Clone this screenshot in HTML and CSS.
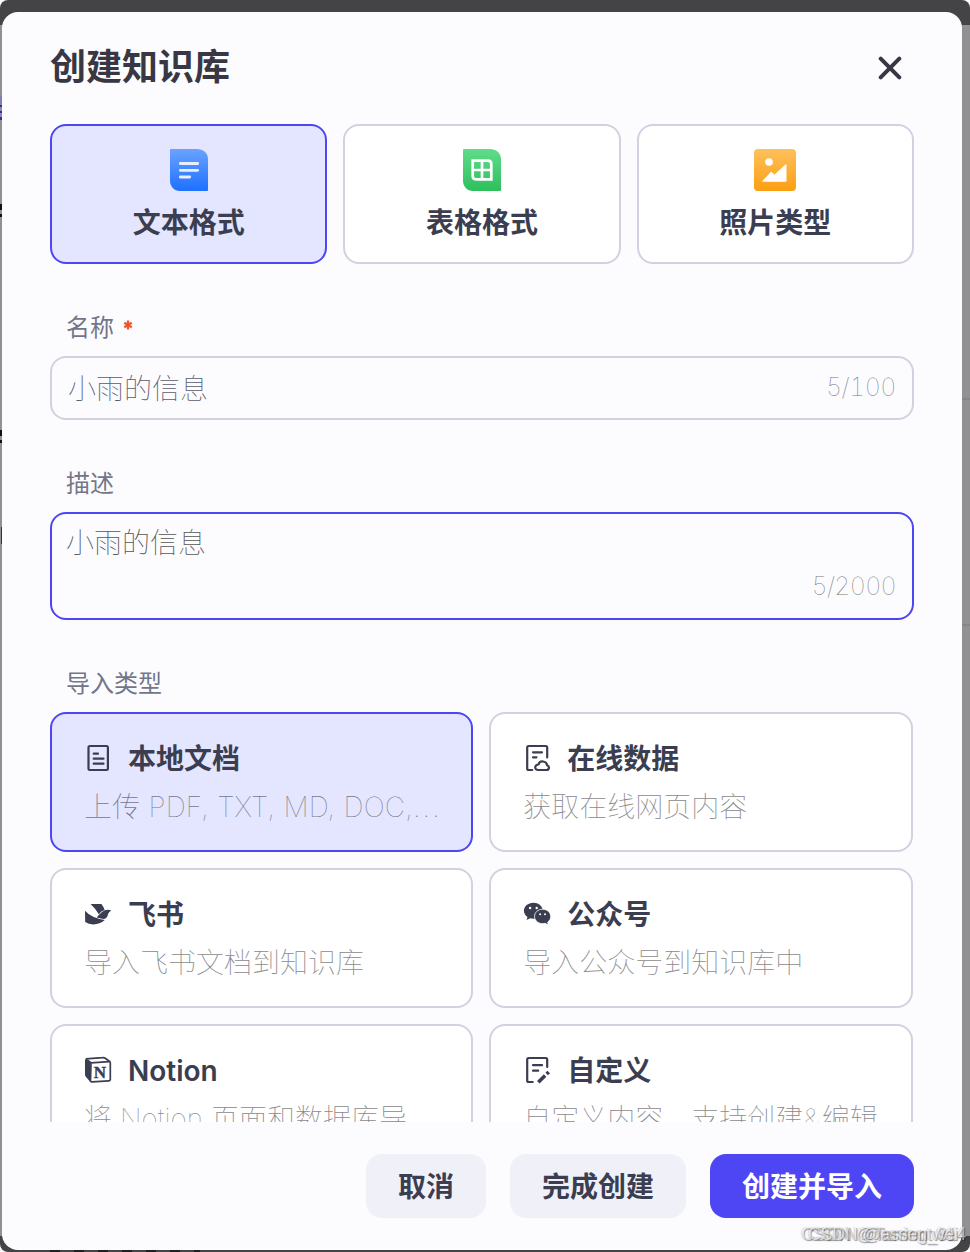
FILE: index.html
```html
<!DOCTYPE html>
<html lang="zh-CN">
<head>
<meta charset="utf-8">
<title>创建知识库</title>
<link rel="stylesheet" href="styles.css">
</head>
<body>
<div class="backdrop">
  <i class="mark mark-link"></i><i class="mark mark-a"></i><i class="mark mark-b"></i><i class="mark mark-c"></i>
  <i class="rule rule-a"></i><i class="rule rule-b"></i>
  <i class="foot-marks"></i>
  <main class="modal">
    <header class="head">
      <h1 class="title">创建知识库</h1>
      <button class="close" aria-label="关闭"><svg width="24" height="24" viewBox="0 0 24 24"><path d="M2.7 2.7 21.3 21.3M21.3 2.7 2.7 21.3" stroke="#383743" stroke-width="4" stroke-linecap="round"/></svg></button>
    </header>
    <div class="body">
      <div class="formats">
        <div class="format selected">
          <svg class="format-icon" width="42" height="42" viewBox="0 0 42 42"><defs><linearGradient id="blue" x2="0" y2="1"><stop stop-color="#69a3ff"/><stop offset="1" stop-color="#1e70ff"/></linearGradient></defs><path d="M3 0H29C35 0 40 4 40 10V41Q40 42 39 42H12C6 42 2 37 2 32V1Q2 0 3 0Z" fill="url(#blue)"/><path d="M12.3 14.5H29.7M12.3 21.3H29.7M12.3 28H21.7" stroke="#e9eeff" stroke-width="2.8" stroke-linecap="round"/></svg>
          <span>文本格式</span>
        </div>
        <div class="format">
          <svg class="format-icon" width="42" height="42" viewBox="0 0 42 42"><defs><linearGradient id="green" x2="0" y2="1"><stop stop-color="#61dc8b"/><stop offset="1" stop-color="#2dbf5c"/></linearGradient></defs><path d="M3 0H29C35 0 40 4 40 10V41Q40 42 39 42H12C6 42 2 37 2 32V1Q2 0 3 0Z" fill="url(#green)"/><path d="M11.7 11.7H27Q30.3 11.7 30.3 15V30.3H15Q11.7 30.3 11.7 27ZM21 11.7V30.3M11.7 21H30.3" fill="none" stroke="#fff" stroke-width="2.7"/></svg>
          <span>表格格式</span>
        </div>
        <div class="format">
          <svg class="format-icon" width="42" height="42" viewBox="0 0 42 42"><defs><linearGradient id="orange" x2="0" y2="1"><stop stop-color="#ffc05c"/><stop offset="1" stop-color="#fa9f12"/></linearGradient></defs><rect width="42" height="42" rx="4" fill="url(#orange)"/><circle cx="15" cy="13" r="3.8" fill="#fff"/><path d="M9 31.3 16.8 23Q17.3 22.5 17.8 23L20.3 25.7 31.5 15.5Q32.5 14.7 32.5 16V32Q32.5 32.8 31.5 32.8H9Q7.5 32.8 9 31.3Z" fill="#fff"/></svg>
          <span>照片类型</span>
        </div>
      </div>

      <div class="label">名称<svg class="required" width="10" height="10" viewBox="0 0 10 10"><path d="M5 .5V9.5M1.2 2.8 8.8 7.2M8.8 2.8 1.2 7.2" stroke="#f0542d" stroke-width="2.3"/></svg></div>
      <div class="field name-field"><span>小雨的信息</span><span class="count">5/100</span></div>
      <div class="label">描述</div>
      <div class="field desc-field"><span>小雨的信息</span><span class="count">5/2000</span></div>
      <div class="label">导入类型</div>

      <div class="sources">
        <div class="source selected">
          <div class="source-name"><svg width="28" height="28" viewBox="0 0 28 28"><g class="line"><rect x="4.5" y="2" width="19.4" height="24" rx="1.4"/><path d="M9.7 9.7H14M9.7 14.7H19.5M9.7 19.7H19.5"/></g></svg><span>本地文档</span></div>
          <div class="source-desc latin">上传 PDF, TXT, MD, DOC,<span class="dots">...</span></div>
        </div>
        <div class="source">
          <div class="source-name"><svg width="28" height="28" viewBox="-.7 0 28 28"><g class="line"><path d="M8.5 26H5Q3.5 26 3.5 24.5V3.5Q3.5 2 5 2H22Q23.5 2 23.5 3.5V13.5M9.3 8.3H18.3M9.3 13.3H12.8"/><path d="M14.5 26H22.8C25.4 26 26.5 22.3 23.3 21.2C23 17 16 15.8 14.8 20.5C10.5 20.8 10.5 26 14.5 26Z"/></g></svg><span>在线数据</span></div>
          <div class="source-desc">获取在线网页内容</div>
        </div>
        <div class="source">
          <div class="source-name"><svg width="28" height="28" viewBox="0 0 28 28"><g class="solid"><path d="M6.6 4H17.4Q19.5 6.5 20.6 10Q17 11 14.8 14.3Q11.4 8.5 6.6 4Z"/><path d="M27.2 10.3Q24.5 12.5 23.8 15Q22.5 20 17 18.6L12.7 17.5Q15 14.5 18 12Q21.5 8.8 27.2 10.3Z"/><path d="M1 10.8Q7 17.8 20.8 20.1Q15.7 24.5 9 24.4Q4.5 24.3 1.2 22Z"/></g></svg><span>飞书</span></div>
          <div class="source-desc">导入飞书文档到知识库</div>
        </div>
        <div class="source">
          <div class="source-name"><svg width="28" height="28" viewBox="-.7 0 28 28"><g class="solid"><path d="M9.6 2.7C4.4 2.7.2 6.3.2 10.8C.2 13.3 1.6 15.5 3.8 17L2.9 20L6.5 18.3C13 20.1 19 16.2 19 10.7C19 6.1 14.8 2.7 9.6 2.7Z"/><path d="M18.8 9.2C14.3 9.2 10.8 12.5 10.8 16.5C10.8 21.3 16 24.8 21.4 23.3L24.7 25L23.9 22.2C25.9 20.8 27 18.8 27 16.5C27 12.4 23.4 9.2 18.8 9.2Z" stroke="#fff" stroke-width=".8"/></g><g fill="#fff"><circle cx="6.4" cy="8" r="1.2"/><circle cx="13" cy="8" r="1.2"/><circle cx="16.4" cy="14.3" r="1"/><circle cx="21.3" cy="14.3" r="1"/></g></svg><span>公众号</span></div>
          <div class="source-desc">导入公众号到知识库中</div>
        </div>
        <div class="source">
          <div class="source-name"><svg width="28" height="28" viewBox="0 0 28 28"><path class="solid" d="M1 3 6.4 6.5V26L1.8 20.7Q1 19.8 1 18.5Z"/><path d="M7 6.8 25 5.7Q26.3 5.6 26.3 7V23.5Q26.3 24.7 25 24.8L8 25.8Q6.5 25.9 6.5 24.5ZM1.8 2.8 18.5 1.6Q20 1.4 21.2 2.2L26 5.7M2 3.3 7 6.8" fill="none" stroke="#3b3d50" stroke-width="1.7" stroke-linejoin="round"/><text x="16" y="21.7" text-anchor="middle" class="notion-n">N</text></svg><span>Notion</span></div>
          <div class="source-desc latin">将 Notion 页面和数据库导<span>...</span></div>
        </div>
        <div class="source">
          <div class="source-name"><svg width="28" height="28" viewBox="-.7 0 28 28"><g class="line"><path d="M9 26H5Q3.5 26 3.5 24.5V3.5Q3.5 2 5 2H22Q23.5 2 23.5 3.5V11M9.3 9.2H18.3M9.3 14.7H14.5"/></g><path d="M14.6 26.3 21.4 19.5M23 17.9 25 15.9" stroke="#3b3d50" stroke-width="3.6"/></svg><span>自定义</span></div>
          <div class="source-desc">自定义内容<span class="comma">，</span>支持创建<span class="amp">&amp;</span>编辑</div>
        </div>
      </div>
    </div>
    <footer class="actions">
      <button class="btn">取消</button>
      <button class="btn">完成创建</button>
      <button class="btn primary">创建并导入</button>
    </footer>
  </main>
  <div class="watermark wm-a">CSDN @Tarring_314</div>
  <div class="watermark wm-b">CSDN @assentwei</div>
</div>
</body>
</html>
```
FILE: styles.css
```css
* { box-sizing: border-box; }
body { margin: 0; background: #fff; font-family: Inter, "Noto Sans CJK SC", sans-serif; color: #3b3d50; }
button { border: 0; padding: 0; font: inherit; color: inherit; }
svg { display: block; flex: none; fill: none; }

.backdrop {
  position: relative;
  width: 970px;
  height: 1252px;
  padding: 12px 8px 2px 2px;
  overflow: hidden;
  border-radius: 8px;
  background: linear-gradient(#444446 25px, #919193 25px, #919193 1236px, #444446 1236px);
}
.mark { position: absolute; left: 0; width: 2px; background: #111; }
.mark-link { top: 96px; height: 24px; background: linear-gradient(#8080a8 9px, #32329c 9px, #32329c 11px, #8888b0 11px, #8888b0 15px, #32329c 15px, #32329c 17px, #8888b0 17px, #8888b0 21px, #32329c 21px); }
.mark-a { top: 204px; height: 13px; background: linear-gradient(#111 6px, #919193 6px, #919193 10px, #111 10px); }
.mark-b { top: 430px; height: 13px; background: linear-gradient(#111 6px, #919193 6px, #919193 10px, #111 10px); }
.mark-c { top: 527px; height: 17px; left: 1px; width: 1px; background: #333; }
.rule { position: absolute; right: 0; width: 8px; height: 2px; background: #858587; }
.rule-a { top: 398px; }
.rule-b { top: 624px; }
.foot-marks { position: absolute; left: 50px; top: 1250px; width: 150px; height: 2px; background: repeating-linear-gradient(90deg, #202022 0 10px, #444446 10px 24px); }

.modal {
  position: relative;
  width: 960px;
  height: 1238px;
  padding: 24px 48px 32px;
  border-radius: 16px;
  background: #fcfcff;
  display: flex;
  flex-direction: column;
}
.head { display: flex; justify-content: space-between; height: 64px; padding-right: 12px; }
.title { margin: 0; font-size: 36px; line-height: 62px; font-weight: 600; color: #383743; }
.close { width: 24px; height: 24px; margin-top: 20px; background: none; }

.body { height: 1022px; padding-top: 24px; overflow: hidden; }
.formats { display: grid; grid-template-columns: repeat(3, 1fr); gap: 16px; margin-bottom: 44px; }
.format {
  height: 140px;
  padding-top: 23px;
  display: flex;
  flex-direction: column;
  align-items: center;
  gap: 12px;
  border: 2px solid #d0d2e0;
  border-radius: 16px;
  background: #fff;
  font-size: 28px;
  line-height: 40px;
  font-weight: 600;
}
.selected { border-color: #4e46f5 !important; background: #e4e6ff !important; }

.label { display: flex; align-items: center; height: 40px; margin-bottom: 8px; padding: 0 0 1px 16px; font-size: 24px; line-height: 34px; color: #737589; }
.required { margin: -5px 0 0 9px; }
.field {
  display: flex;
  justify-content: space-between;
  border: 2px solid #d0d2e0;
  border-radius: 16px;
  padding: 0 16px;
  margin-bottom: 44px;
  font-size: 28px;
  font-weight: 100;
  color: #5a5b6c;
}
.name-field { height: 64px; align-items: center; padding-bottom: 2px; }
.count { color: #70738a; font-size: 25px; font-variant-numeric: tabular-nums; letter-spacing: -.5px; }
.desc-field { height: 108px; padding: 9px 16px 12px 14px; border-color: #4e46f5; line-height: 40px; color: #555; }
.desc-field .count { align-self: flex-end; color: #777; letter-spacing: -.7px; }

.sources { width: 863px; display: grid; grid-template-columns: 423.3fr 423.7fr; gap: 16px; }
.source { min-width: 0; height: 140px; padding: 24px 32px; border: 2px solid #d0d2e0; border-radius: 16px; background: #fff; }
.source-name { display: flex; align-items: center; gap: 16px; height: 40px; font-size: 28px; line-height: 40px; font-weight: 600; }
.source-name span { padding-top: 2px; }
.source-desc { margin-top: 9px; height: 40px; line-height: 40px; font-size: 28px; font-weight: 100; white-space: nowrap; color: #8a8a8e; }
.source.selected .latin { letter-spacing: .2px; color: #77778a; }
.dots { letter-spacing: 2px; }
.comma { vertical-align: -5px; line-height: 1; }
.amp { letter-spacing: 2px; }
.line { fill: none; stroke: #3b3d50; stroke-width: 2.2; stroke-linecap: round; stroke-linejoin: round; }
.solid { fill: #3b3d50; }
.notion-n { font: bold 17px "Liberation Serif", serif; fill: #3b3d50; stroke: #3b3d50; stroke-width: .4px; }

.actions { display: flex; justify-content: flex-end; gap: 24px; margin-top: 32px; }
.btn { height: 64px; padding: 2px 32px 0; border-radius: 16px; background: #eff0f8; font-size: 28px; line-height: 62px; font-weight: 600; white-space: nowrap; }
.primary { background: #4e46f5; color: #fff; }

.watermark {
  position: absolute;
  top: 1223px;
  font: 17.5px/22px "Liberation Sans", sans-serif;
  white-space: nowrap;
  color: rgba(255, 255, 255, .6);
  text-shadow: 1px 1px 1px rgba(0, 0, 0, .4), -1px 0 1px rgba(0, 0, 0, .15);
}
.wm-a { right: 4px; }
.wm-b { right: 12px; }
```
